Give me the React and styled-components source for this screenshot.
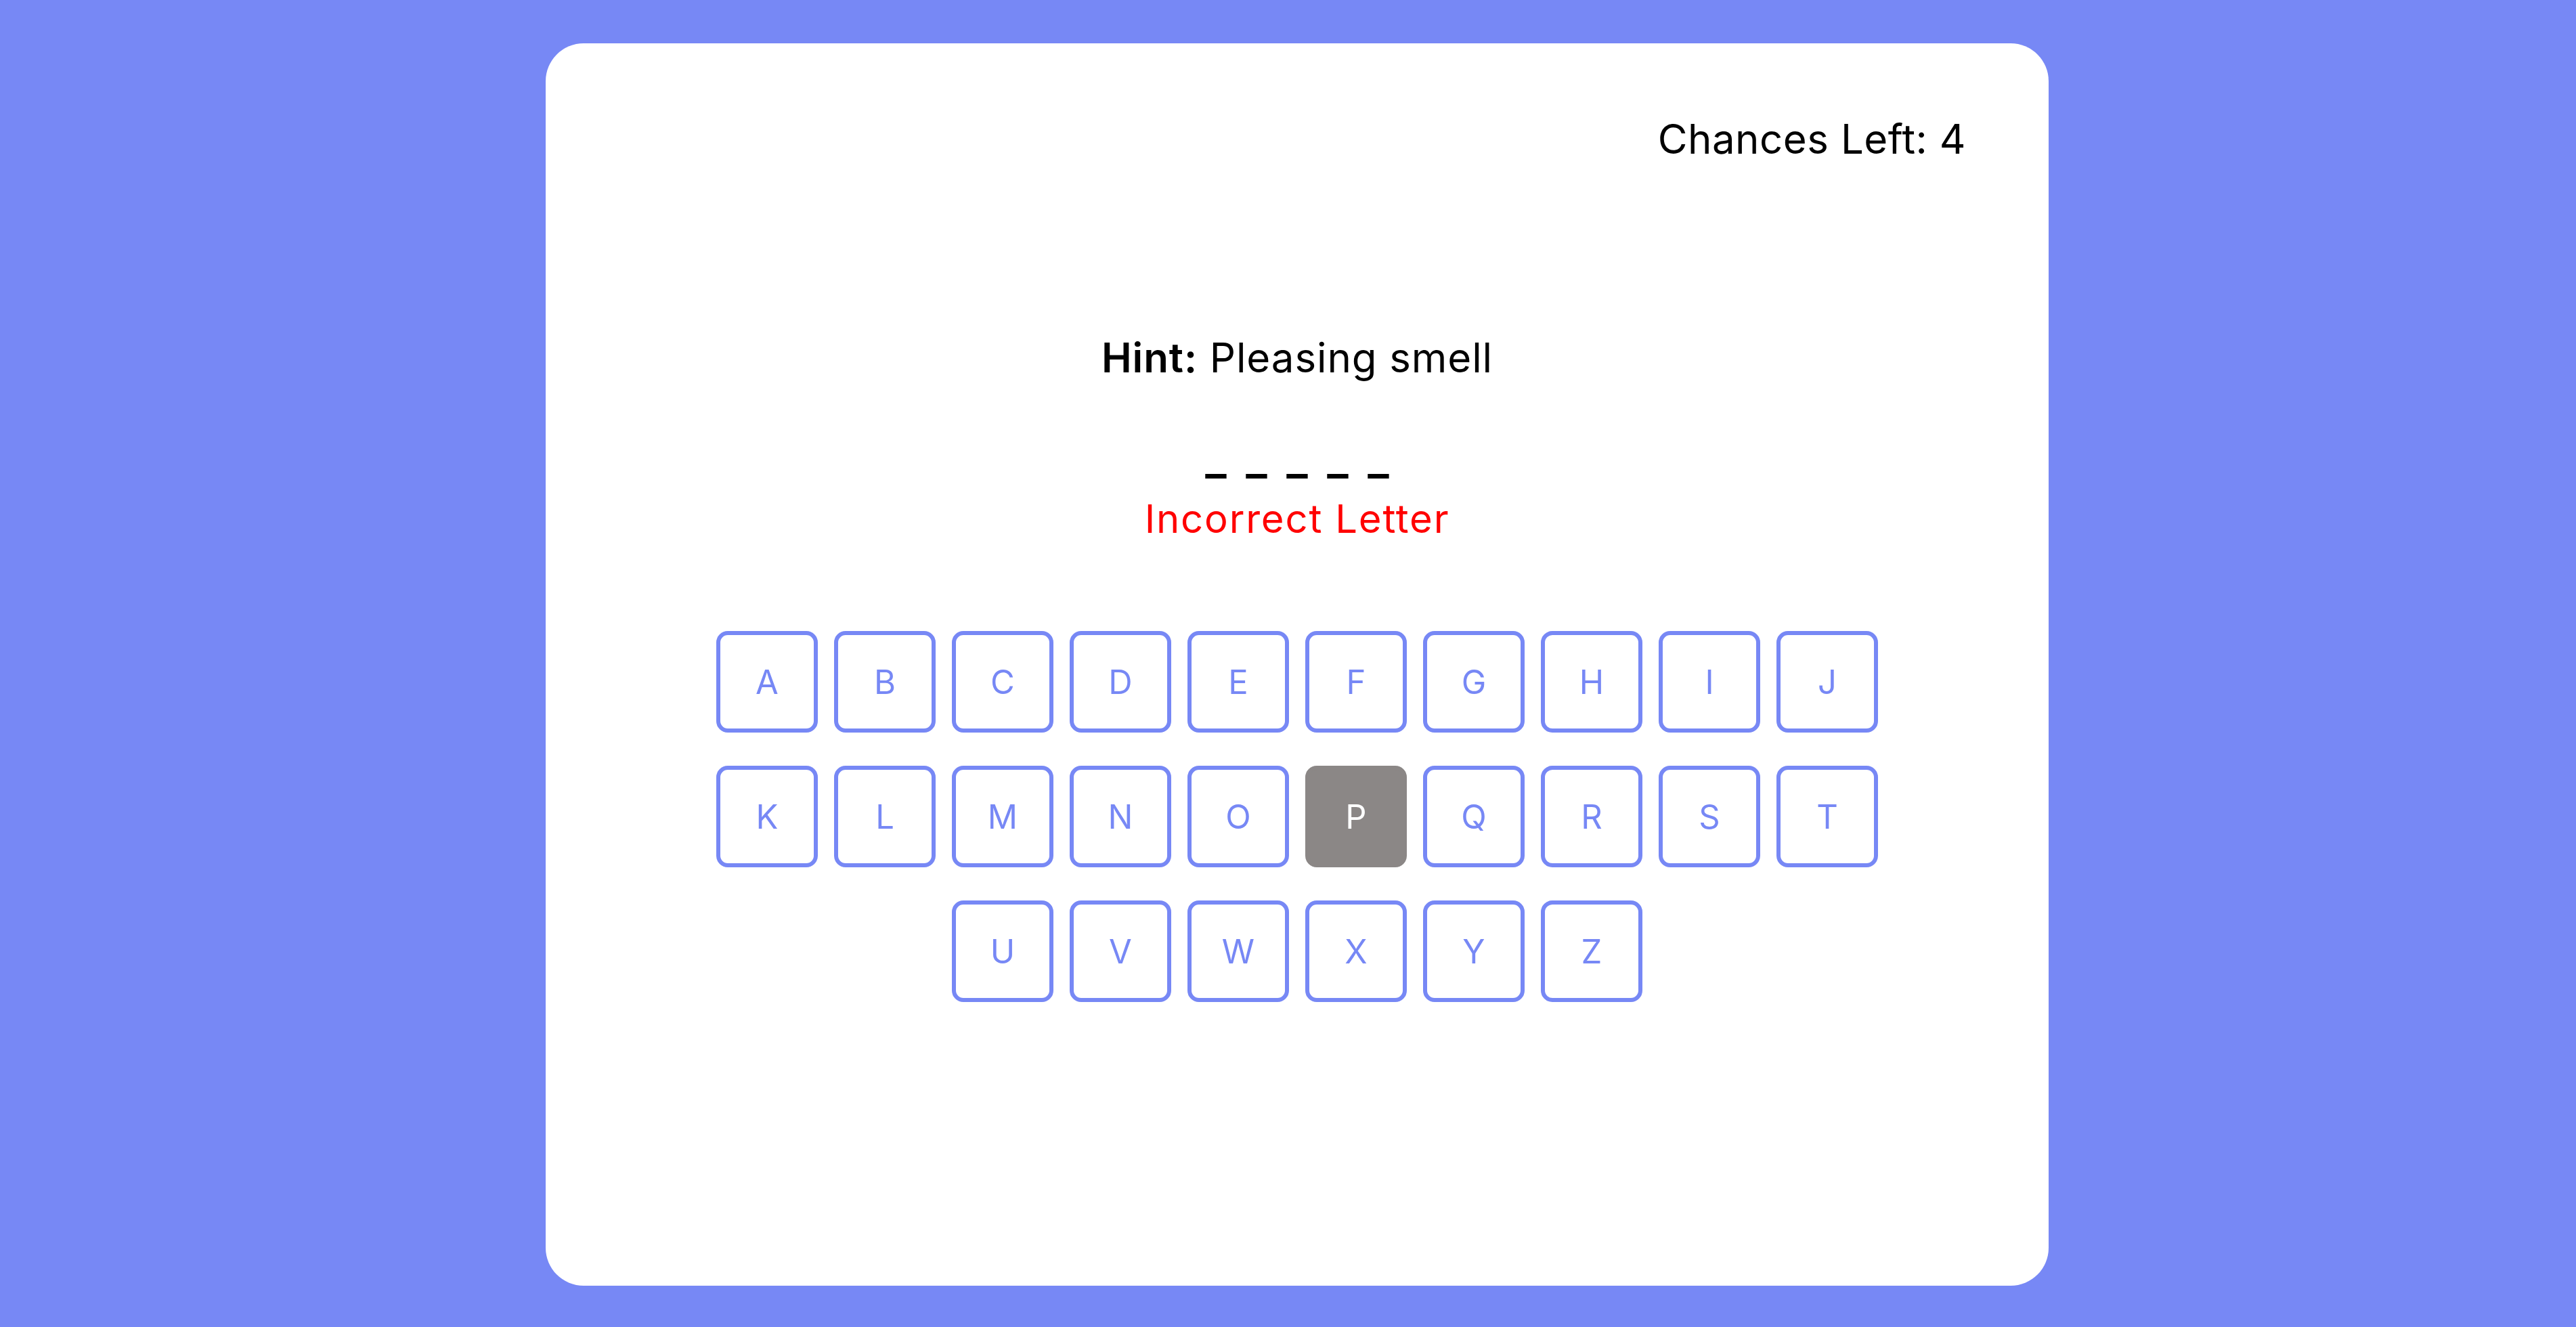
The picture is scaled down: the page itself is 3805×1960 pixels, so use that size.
import React, { Component } from 'react';
import styled, { createGlobalStyle, css } from 'styled-components';

const GlobalStyle = createGlobalStyle`
  html, body {
    margin: 0;
    padding: 0;
    background: #7788f5;
  }
  body {
    font-family: Inter, "Open Sans", sans-serif;
  }
`;

const Page = styled.div`
  display: flex;
  justify-content: center;
  padding: 64px 0 61px 27px;
  min-height: 1960px;
  box-sizing: border-box;
`;

const Card = styled.div`
  width: 2220px;
  height: 1835px;
  box-sizing: border-box;
  background: #fff;
  border-radius: 56px;
  padding: 111px 122px 0;
  display: flex;
  flex-direction: column;
  align-items: center;
`;

const Chances = styled.div`
  align-self: flex-end;
  font-size: 60px;
  line-height: 1;
  letter-spacing: 0.5px;
  color: #000;
`;

const Hint = styled.div`
  margin-top: 263px;
  font-size: 60px;
  line-height: 1;
  letter-spacing: 0.9px;
  color: #000;

  b {
    font-weight: 600;
  }
`;

const Word = styled.div`
  margin-top: 90px;
  display: flex;
  gap: 28px;
  font-size: 60px;
  line-height: 1;
  color: #000;
`;

const Blank = styled.span`
  display: inline-block;
  width: 32px;
  text-align: center;
  font-weight: 700;
  transform: scaleX(1.1);
`;

const Message = styled.div`
  margin-top: 29px;
  font-size: 58px;
  line-height: 1;
  letter-spacing: 1.8px;
  color: #ff0000;
`;

const Keyboard = styled.div`
  margin-top: 137px;
  width: 1716px;
  display: flex;
  flex-wrap: wrap;
  justify-content: center;
  gap: 49px 24px;
`;

const Key = styled.button`
  width: 150px;
  height: 150px;
  box-sizing: border-box;
  border: 6px solid #7788f5;
  border-radius: 17px;
  background: #fff;
  color: #7788f5;
  font-family: Inter, sans-serif;
  font-size: 49px;
  font-weight: 400;
  display: flex;
  align-items: center;
  justify-content: center;
  padding: 0;
  cursor: pointer;

  ${props => props.used && css`
    background: #8b8786;
    border-color: #8b8786;
    color: #fff;
  `}
`;

const LETTERS = 'ABCDEFGHIJKLMNOPQRSTUVWXYZ'.split('');

class App extends Component {
  state = {
    chances: 4,
    guessed: ['P'],
    word: 'SCENT',
  };

  guess = (letter) => {
    if (this.state.guessed.includes(letter)) return;
    this.setState({ guessed: [...this.state.guessed, letter] });
  };

  render() {
    const { chances, guessed, word } = this.state;

    return (
      <Page>
        <GlobalStyle />
        <Card>
          <Chances>Chances Left: {chances}</Chances>
          <Hint>
            <b>Hint:</b> Pleasing smell
          </Hint>
          <Word>
            {word.split('').map((ch, i) => (
              <Blank key={i}>_</Blank>
            ))}
          </Word>
          <Message>Incorrect Letter</Message>
          <Keyboard>
            {LETTERS.map(letter => (
              <Key
                key={letter}
                used={guessed.includes(letter)}
                onClick={() => this.guess(letter)}
              >
                {letter}
              </Key>
            ))}
          </Keyboard>
        </Card>
      </Page>
    );
  }
}

export default App;
